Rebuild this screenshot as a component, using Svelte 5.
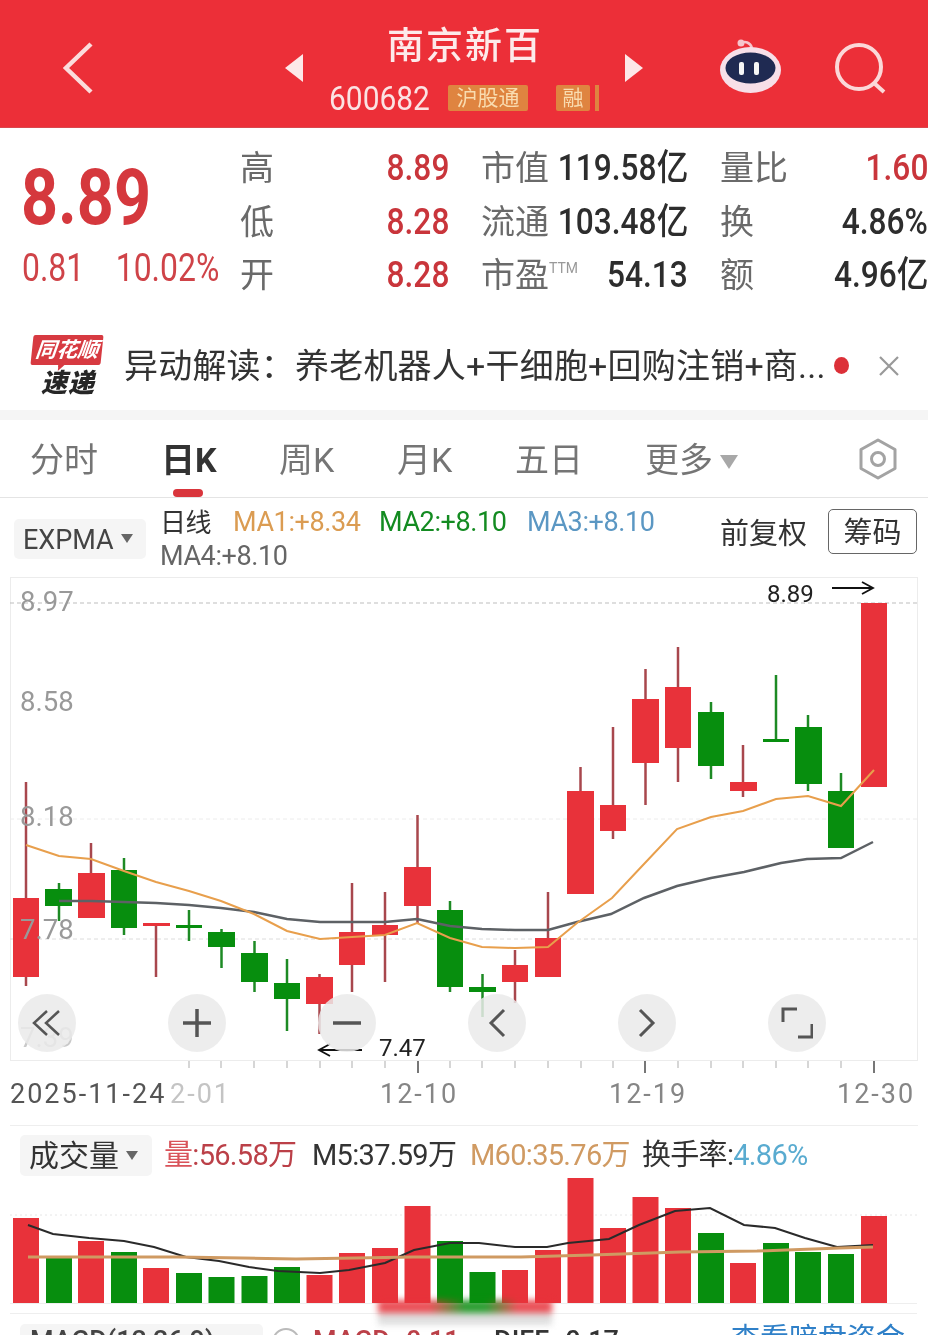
<script lang="ts">
  const R = '#e8323a';
  const G = '#078e0e';

  const stats = [
    [{ k: '高', v: '8.89', red: true }, { k: '市值', v: '119.58亿' }, { k: '量比', v: '1.60', red: true }],
    [{ k: '低', v: '8.28', red: true }, { k: '流通', v: '103.48亿' }, { k: '换', v: '4.86%' }],
    [{ k: '开', v: '8.28', red: true }, { k: '市盈', ttm: true, v: '54.13' }, { k: '额', v: '4.96亿' }]
  ];

  const tabs = ['分时', '日K', '周K', '月K', '五日', '更多'];

  // cx, wick top, wick bottom, body top, body bottom, body left, body right
  const candles = [
    [26, 782, 986, 898, 977, 13, 39, R],
    [59, 883, 921, 889, 906, 45, 72, G],
    [91, 843, 918, 873, 918, 78, 105, R],
    [124, 858, 935, 870, 928, 111, 137, G],
    [156, 923, 977, 923, 926, 143, 170, R],
    [189, 910, 941, 925, 928, 176, 202, G],
    [221.5, 929, 968, 932, 947, 208, 235, G],
    [254.5, 941, 992, 953, 982, 241, 268, G],
    [287, 959, 1031, 983, 999, 274, 300, G],
    [319.5, 974, 1034, 977, 1004, 306, 333, R],
    [352, 883, 992, 932, 965, 339, 365, R],
    [385, 892, 982, 925, 935, 372, 398, R],
    [417.5, 815, 923, 867, 906, 404, 431, R],
    [450, 901, 992, 910, 987, 437, 463, G],
    [482.5, 974, 1017, 987, 992, 469, 496, G],
    [515, 950, 1003, 965, 982, 502, 528, R],
    [548, 892, 977, 938, 977, 535, 561, R],
    [580.5, 767, 894, 791, 894, 567, 594, R],
    [613, 727, 839, 805, 831, 600, 626, R],
    [645.5, 669, 805, 699, 763, 632, 659, R],
    [678, 647, 782, 687, 748, 665, 691, R],
    [711, 702, 779, 712, 766, 698, 724, G],
    [743, 745, 797, 782, 791, 730, 757, R],
    [776, 675, 742, 739, 742, 763, 789, G],
    [808, 715, 791, 727, 784, 795, 822, G],
    [841, 773, 848, 791, 848, 828, 854, G],
    [874, 603, 787, 603, 787, 861, 887, R]
  ] as const;

  const ma1 = '26,845 59,856 91,859 124,871 156,882 189,891 221,901 254,914 287,931 320,939 352,937 385,935 417,923 450,938 482,947 515,948 548,947 577,923 612,898 644,864 677,829 711,817 743,811 776,799 808,796 841,806 874,770';
  const ma2 = '59,901 91,901 124,902 156,903 189,905 221,908 254,912 287,919 320,922 352,922 385,922 417,919 450,926 482,929 515,930 548,930 577,922 611,914 644,898 677,886 711,878 744,872 781,863 807,859 841,858 873,842';

  const grid = [
    { y: 603, c: '#bdbdbd' },
    { y: 819, c: '#ececec' },
    { y: 939, c: '#dcdcdc' }
  ];
  const yLabels = [
    { t: '8.97', y: 611 },
    { t: '8.58', y: 711 },
    { t: '8.18', y: 826 },
    { t: '7.78', y: 939 }
  ];
  const ticks = [189, 221, 254, 287, 320, 352, 385, 450, 482, 515, 548, 581, 613, 678, 711, 743, 776, 808, 841];
  const bigTicks = [418, 645, 874];

  const tops = [1218, 1257, 1241, 1252, 1268, 1273, 1277, 1276, 1267, 1275, 1253, 1248, 1206, 1241, 1272, 1270, 1250, 1178, 1228, 1197, 1208, 1233, 1263, 1243, 1252, 1254, 1216];
  const volColors = 'RGRGRGGGGRRRRGGRRRRRRGRGGGR';
  const centers = candles.map((c) => c[0]);

  const m5 = '28,1225 53,1234 89,1238 124,1241 154,1247 186,1257 219,1261 249,1267 278,1271 320,1273 349,1270 385,1263 414,1250 450,1243 479,1243 515,1247 547,1247 568,1243 609,1239 639,1225 675,1211 710,1208 744,1225 775,1228 805,1238 837,1247 873,1245';
  const m60 = '28,1257 178,1257 296,1259 414,1257 521,1257 592,1255 680,1252 757,1251 840,1248 873,1247';
</script>

<div class="screen">
  <header class="top">
    <svg class="back" width="30" height="52" viewBox="0 0 30 52" fill="none"><path d="M28 2 3 26l25 24" stroke="#fbdcdc" stroke-width="4.5" /></svg>
    <div class="title">
      <svg width="18" height="28" viewBox="0 0 18 28"><path d="M18 0v28L0 14z" fill="#fde8e8" /></svg>
      <div class="name">
        <div class="cn">南京新百</div>
        <div class="code">
          <span class="num">600682</span>
          <span class="badge">沪股通</span>
          <span class="badge rong">融</span>
          <span class="sliver"></span>
        </div>
      </div>
      <svg width="18" height="28" viewBox="0 0 18 28"><path d="M0 0v28l18-14z" fill="#fde8e8" /></svg>
    </div>
    <svg class="robot" width="61" height="56" viewBox="0 0 61 56">
      <path d="M21 5c4-2 9-1 11 5" fill="none" stroke="#f6c5cc" stroke-width="2.500" />
      <circle cx="21" cy="5" r="3.500" fill="#f6c5cc" />
      <ellipse cx="30.500" cy="32" rx="30.500" ry="23" fill="#f7dfe8" />
      <ellipse cx="30.500" cy="30" rx="25" ry="15.500" fill="#1f2a52" />
      <rect x="19" y="24" width="5" height="13" rx="2" fill="#f6f6f6" />
      <rect x="34" y="24" width="5" height="13" rx="2" fill="#f6f6f6" />
    </svg>
    <svg class="search" width="52" height="52" viewBox="0 0 52 52" fill="none">
      <circle cx="25" cy="25" r="22" stroke="#fbd8d8" stroke-width="4" />
      <path d="M40 41l10 9" stroke="#fbd8d8" stroke-width="4" />
    </svg>
  </header>

  <section class="quote">
    <div class="price">
      <div class="big">8.89</div>
      <div class="chg"><span>0.81</span><span>10.02%</span></div>
    </div>
    <div class="stats">
      {#each stats as row}
        {#each row as s}
          <div class="stat">
            <span class="k">{s.k}{#if s.ttm}<sup>TTM</sup>{/if}</span>
            <span class="v" class:red={s.red}>{s.v}</span>
          </div>
        {/each}
      {/each}
    </div>
  </section>

  <section class="notice">
    <div class="logo">
      <div class="bubble"><span>同花顺</span></div>
      <div class="fast">速递</div>
    </div>
    <div class="msg">异动解读：养老机器人+干细胞+回购注销+商...</div>
    <i class="dot"></i>
    <svg width="22" height="22" viewBox="0 0 22 22"><path d="M2 2l18 18M20 2 2 20" stroke="#999" stroke-width="2.200" /></svg>
  </section>

  <nav class="tabs">
    {#each tabs as t, i}
      <span class="tab t{i}" class:on={i === 1}>{t}{#if i === 5}<i class="caret large"></i>{/if}</span>
    {/each}
    <svg class="hex" width="40" height="42" viewBox="0 0 40 42" fill="none">
      <path d="M20 2l17 9.500v19L20 40 3 30.500v-19z" stroke="#a3a3a3" stroke-width="3" stroke-linejoin="round" />
      <circle cx="20" cy="21" r="6.500" stroke="#a3a3a3" stroke-width="3" />
    </svg>
  </nav>

  <div class="legend">
    <div class="pill expma">EXPMA<i class="caret"></i></div>
    <div class="lines">
      <div class="line">
        <span class="day">日线</span>
        <span class="ma1">MA1:+8.34</span>
        <span class="ma2">MA2:+8.10</span>
        <span class="ma3">MA3:+8.10</span>
      </div>
      <div class="line"><span class="ma4">MA4:+8.10</span></div>
    </div>
    <span class="fq">前复权</span>
    <span class="chip">筹码</span>
  </div>

  <div class="kline">
    <svg class="chart" width="928" height="538" viewBox="0 577 928 538">
      <rect x="10.500" y="577.500" width="907" height="483" fill="none" stroke="#ececec" />
      {#each grid as g}
        <line x1="10" x2="917" y1={g.y} y2={g.y} stroke={g.c} stroke-dasharray="4 3" />
      {/each}
      {#each candles as c}
        <line x1={c[0]} x2={c[0]} y1={c[1]} y2={c[2]} stroke={c[7] === R ? '#a8474d' : '#1d8a24'} stroke-width="2.500" />
        <rect x={c[5]} y={c[3]} width={c[6] - c[5]} height={c[4] - c[3]} fill={c[7]} />
      {/each}
      <polyline points={ma2} fill="none" stroke="#5d6165" stroke-width="2.500" />
      <polyline points={ma1} fill="none" stroke="#e89f4c" stroke-width="2" />
      {#each yLabels as l}
        <text x="20" y={l.y} class="axis">{l.t}</text>
      {/each}
      <text x="20" y="1047" class="axis faded">7.39</text>

      <text x="767" y="602" class="mark">8.89</text>
      <path d="M832 588h41m-11-6 11 6-11 6" fill="none" stroke="#111" stroke-width="1.800" />
      <text x="379" y="1056" class="mark">7.47</text>
      <path d="M362 1050h-43m11-6-11 6 11 6" fill="none" stroke="#111" stroke-width="1.800" />

      {#each ticks as t}
        <line x1={t} x2={t} y1="1061" y2="1068" stroke="#c9c9c9" stroke-width="1.500" />
      {/each}
      {#each bigTicks as t}
        <line x1={t} x2={t} y1="1061" y2="1073" stroke="#777" stroke-width="2" />
      {/each}
      <text x="10" y="1103" class="date dark">2025-11-24</text>
      <text x="170" y="1103" class="date pale">2-01</text>
      <text x="380" y="1103" class="date">12-10</text>
      <text x="609" y="1103" class="date">12-19</text>
      <text x="837" y="1103" class="date">12-30</text>
    </svg>

    <div class="controls">
      <button aria-label="first"><svg width="32" height="32" viewBox="0 0 32 32" fill="none"><path d="M16 4 3 16l13 12M28 4 15 16l13 12" stroke="#555" stroke-width="2.500" /></svg></button>
      <button aria-label="zoom in"><svg width="30" height="30" viewBox="0 0 30 30"><path d="M15 1v28M1 15h28" stroke="#555" stroke-width="3.500" /></svg></button>
      <button aria-label="zoom out"><svg width="30" height="30" viewBox="0 0 30 30"><path d="M1 15h28" stroke="#555" stroke-width="3.500" /></svg></button>
      <button aria-label="prev"><svg width="18" height="30" viewBox="0 0 18 30" fill="none"><path d="M16 2 3 15l13 13" stroke="#555" stroke-width="3" /></svg></button>
      <button aria-label="next"><svg width="18" height="30" viewBox="0 0 18 30" fill="none"><path d="M2 2l13 13L2 28" stroke="#555" stroke-width="3" /></svg></button>
      <button aria-label="fullscreen"><svg width="32" height="32" viewBox="0 0 32 32" fill="none"><path d="M16 2H2v13M17 30h14V17" stroke="#555" stroke-width="3" /></svg></button>
    </div>
  </div>

  <div class="volume">
    <div class="vol-head">
      <div class="pill vol-pill">成交量<i class="caret"></i></div>
      <span class="vi red-t"><b>量</b>:56.58万</span>
      <span class="vi dark-t">M5:37.59万</span>
      <span class="vi or-t">M60:35.76万</span>
      <span class="vi dark-t">换手率:<em>4.86%</em></span>
    </div>
    <svg class="bars" width="928" height="128" viewBox="0 1177 928 128">
      <line x1="10" x2="917" y1="1215" y2="1215" stroke="#e6e6e6" stroke-dasharray="2 3" />
      <line x1="10" x2="917" y1="1303.500" y2="1303.500" stroke="#eee" />
      {#each tops as t, i}
        <rect x={centers[i] - 13} y={t} width="26" height={1303 - t} fill={volColors[i] === 'R' ? R : G} />
      {/each}
      <polyline points={m5} fill="none" stroke="#2a2a2a" stroke-width="2" />
      <polyline points={m60} fill="none" stroke="#cf9a62" stroke-width="3" />
    </svg>
  </div>

  <div class="macd">
    <div class="pill macd-pill">MACD(12,26,9)</div>
    <span class="info"></span>
    <span class="m m-a red-t">MACD:-0.11</span>
    <span class="m m-b dark-t">DIFF:-0.17</span>
    <span class="m link">查看暗盘资金</span>
  </div>
  <div class="smear"></div>
</div>

<style>
  :global(body) {
    margin: 0;
    background: #fff;
  }
  .screen {
    position: relative;
    width: 928px;
    height: 1335px;
    overflow: hidden;
    background: #fff;
    font-family: Roboto, 'Noto Sans CJK SC', sans-serif;
    filter: blur(0.5px);
  }
  .top {
    display: flex;
    align-items: flex-start;
    box-sizing: border-box;
    height: 128px;
    background: #ec2f38;
    border-bottom: 1px solid #d9484e;
    padding-left: 63px;
  }
  .back {
    margin-top: 42px;
  }
  .title {
    display: flex;
    align-items: center;
    margin-left: 192px;
    width: 358px;
    height: 136px;
    justify-content: space-between;
  }
  .name {
    width: 270px;
    margin-top: 3px;
  }
  .cn {
    color: #fdeaea;
    font-size: 37px;
    font-weight: 500;
    line-height: 42px;
    letter-spacing: 2px;
    text-align: center;
    padding-left: 2px;
  }
  .code {
    display: flex;
    align-items: center;
    margin-top: 15px;
    height: 30px;
    margin-left: 0;
  }
  .num {
    color: #fbe3e3;
    font-size: 34px;
    width: 119px;
    transform: scaleX(0.88);
    transform-origin: left;
  }
  .badge {
    display: block;
    background: #df8440;
    color: #f9dcb0;
    font-size: 21px;
    line-height: 26px;
    width: 80px;
    text-align: center;
    border-radius: 2px;
  }
  .rong {
    width: 34px;
    margin-left: 28px;
  }
  .sliver {
    width: 4px;
    height: 26px;
    margin-left: 5px;
    background: #df8440;
  }
  .robot {
    margin-left: 77px;
    margin-top: 38px;
  }
  .search {
    margin-left: 53px;
    margin-top: 42px;
  }

  .quote {
    display: flex;
    height: 196px;
    box-sizing: border-box;
    padding: 14px 0 0 22px;
  }
  .price {
    width: 218px;
    color: #d5383d;
  }
  .big {
    font-size: 77px;
    font-weight: 700;
    line-height: 84px;
    margin-top: 14px;
    transform: scaleX(0.84);
    transform-origin: left;
    margin-left: -1px;
  }
  .chg {
    display: flex;
    justify-content: space-between;
    width: 193px;
    font-size: 38px;
    line-height: 40px;
    margin-top: 8px;
    color: #cf4348;
  }
  .chg span {
    display: inline-block;
    transform: scaleX(0.84);
    transform-origin: left;
  }
  .chg span:last-child {
    transform-origin: right;
    margin-right: 4px;
  }
  .stats {
    display: grid;
    grid-template-columns: 209px 207px 208px;
    grid-auto-rows: 53.5px;
    column-gap: 32px;
    height: 160px;
  }
  .stat {
    display: flex;
    align-items: baseline;
    justify-content: space-between;
    white-space: nowrap;
    line-height: 53px;
    overflow: visible;
  }
  .k {
    color: #6a6a6a;
    font-size: 34px;
    flex: none;
  }
  .k sup {
    font-size: 14px;
    color: #999;
    vertical-align: 14px;
    line-height: 0;
  }
  .v {
    color: #2d2d2d;
    font-size: 36px;
    font-weight: 500;
    display: inline-block;
    flex: none;
    margin-left: -20px;
    transform: scaleX(0.88);
    transform-origin: right;
  }
  .v.red {
    color: #c9353b;
  }

  .notice {
    display: flex;
    align-items: center;
    height: 96px;
    box-sizing: border-box;
    padding-left: 30px;
    border-bottom: 10px solid #f5f5f5;
  }
  .logo {
    width: 76px;
    margin-top: 1px;
  }
  .bubble {
    position: relative;
    background: #d73a41;
    transform: skewX(-6deg);
    height: 30px;
    width: 70px;
    margin-left: 2px;
    margin-top: -2px;
    border-radius: 2px;
    text-align: center;
  }
  .bubble::after {
    content: '';
    position: absolute;
    left: 28px;
    bottom: -6px;
    border: 4px solid transparent;
    border-top: 4px solid #d73a41;
    border-left: 4px solid #d73a41;
  }
  .bubble span {
    color: #fff;
    font-size: 21px;
    font-weight: 700;
    font-style: italic;
    line-height: 30px;
    display: block;
  }
  .fast {
    color: #262626;
    font-size: 26px;
    font-weight: 900;
    font-style: italic;
    line-height: 30px;
    text-align: center;
    margin-top: 3px;
    letter-spacing: 1px;
  }
  .msg {
    margin-left: 18px;
    margin-top: -7px;
    width: 710px;
    font-size: 34px;
    letter-spacing: 0.2px;
    color: #333;
    white-space: nowrap;
  }
  .dot {
    width: 15px;
    height: 17px;
    border-radius: 50%;
    background: #dc3038;
    margin-top: -4px;
  }
  .notice svg {
    margin-left: 29px;
    margin-top: -2px;
  }

  .tabs {
    position: relative;
    display: flex;
    align-items: center;
    height: 78px;
    box-sizing: border-box;
    border-bottom: 1px solid #e4e4e4;
  }
  .tab {
    color: #757575;
    font-size: 34px;
    position: absolute;
    top: 13px;
    white-space: nowrap;
  }
  .t0 { left: 30px; }
  .t1 { left: 161px; }
  .t2 { left: 279px; }
  .t3 { left: 397px; }
  .t4 { left: 515px; }
  .t5 { left: 645px; }
  .tab.on {
    color: #333;
    font-weight: 700;
  }
  .tab.on::after {
    content: '';
    position: absolute;
    left: 12px;
    top: 56px;
    width: 30px;
    height: 8px;
    border-radius: 4px;
    background: #d9353c;
  }
  .caret {
    display: inline-block;
    border: 6px solid transparent;
    border-top: 9px solid #666;
    border-bottom: 0;
    margin-left: 7px;
    vertical-align: 6px;
  }
  .caret.large {
    border-width: 14px 9px 0;
    border-top-color: #a8a8a8;
    vertical-align: 3px;
  }
  .hex {
    position: absolute;
    right: 30px;
    top: 18px;
  }

  .legend {
    display: flex;
    height: 79px;
    box-sizing: border-box;
    padding-left: 14px;
    position: relative;
  }
  .pill {
    background: #f5f5f5;
    border-radius: 5px;
    color: #444;
    white-space: nowrap;
  }
  .expma {
    width: 132px;
    height: 40px;
    box-sizing: border-box;
    margin-top: 21px;
    padding-left: 9px;
    font-size: 27px;
    line-height: 42px;
  }
  .lines {
    margin-left: 14px;
    margin-top: 7px;
    font-size: 27px;
    letter-spacing: -0.4px;
  }
  .line {
    display: flex;
    height: 34px;
    align-items: center;
  }
  .day {
    color: #333;
    width: 73px;
    font-size: 26px;
    margin-top: -3px;
  }
  .ma1 {
    color: #db9c52;
    width: 146px;
  }
  .ma2 {
    color: #138b21;
    width: 148px;
  }
  .ma3 {
    color: #5b97c3;
  }
  .ma4 {
    color: #666;
  }
  .fq {
    position: absolute;
    left: 720px;
    top: 12px;
    font-size: 29px;
    color: #333;
  }
  .chip {
    position: absolute;
    left: 828px;
    top: 11px;
    width: 89px;
    height: 45px;
    box-sizing: border-box;
    border: 1px solid #666;
    border-radius: 5px;
    text-align: center;
    font-size: 29px;
    line-height: 46px;
    color: #333;
  }

  .kline {
    position: relative;
    height: 548px;
  }
  .chart {
    display: block;
  }
  .axis {
    font-size: 27.500px;
    fill: #999;
  }
  .faded {
    fill: #c9c9c9;
  }
  .mark {
    font-size: 24px;
    fill: #222;
  }
  .date {
    font-size: 27px;
    fill: #868686;
    letter-spacing: 2px;
  }
  .date.dark {
    fill: #555;
  }
  .date.pale {
    fill: #c4c4c4;
  }
  .controls {
    position: absolute;
    left: 18px;
    top: 417px;
    display: flex;
    gap: 92px;
  }
  .controls button {
    display: flex;
    align-items: center;
    justify-content: center;
    width: 58px;
    height: 58px;
    padding: 0;
    border: 0;
    border-radius: 50%;
    background: rgba(234, 234, 234, 0.85);
  }

  .volume {
    position: relative;
    box-sizing: border-box;
    height: 187px;
    margin: 0 10px;
    border-top: 1px solid #eee;
  }
  .vol-head {
    display: flex;
    align-items: center;
    height: 51px;
    padding: 7px 0 0 10px;
    box-sizing: border-box;
  }
  .vol-pill {
    width: 132px;
    height: 41px;
    box-sizing: border-box;
    padding-left: 9px;
    font-size: 30px;
    line-height: 41px;
    color: #333;
  }
  .vi {
    font-size: 29px;
    letter-spacing: -0.700px;
    position: absolute;
    top: 5px;
    white-space: nowrap;
  }
  .vi b {
    font-weight: 400;
    color: #d9535a;
  }
  .vi em {
    font-style: normal;
    color: #59abd0;
  }
  .vi:nth-child(2) { left: 154px; }
  .vi:nth-child(3) { left: 302px; }
  .vi:nth-child(4) { left: 460px; }
  .vi:nth-child(5) { left: 632px; }
  .red-t { color: #bb4048; }
  .dark-t { color: #333; }
  .or-t { color: #d09a62; }
  .bars {
    display: block;
    margin: 0 0 0 -10px;
  }
  .smear {
    position: absolute;
    left: 378px;
    top: 1300px;
    width: 174px;
    height: 25px;
    background: linear-gradient(#d9d9d900 0, #d9d9d900 48%, #d9d9d9 56%, #d9d9d9 100%),
      linear-gradient(90deg, #e8323a, #e8323a 30%, #078e0e 50%, #078e0e 62%, #e8323a 80%);
    filter: blur(3px);
    opacity: 0.85;
  }
  .macd {
    position: absolute;
    left: 10px;
    right: 11px;
    top: 1313px;
    height: 30px;
    border-top: 1px solid #eee;
  }
  .macd-pill {
    position: absolute;
    left: 10px;
    top: 10px;
    width: 243px;
    height: 30px;
    padding-left: 10px;
    box-sizing: border-box;
    font-size: 27px;
    line-height: 34px;
    font-weight: 500;
  }
  .info {
    position: absolute;
    left: 262px;
    top: 14px;
    width: 24px;
    height: 24px;
    border: 2px solid #bbb;
    border-radius: 50%;
  }
  .m {
    position: absolute;
    top: 12px;
    line-height: 30px;
    font-size: 27px;
    white-space: nowrap;
    font-weight: 500;
  }
  .m-a { left: 303px; }
  .m-b { left: 484px; }
  .m.link {
    right: 12px;
    color: #2f80c8;
    font-size: 29px;
    font-weight: 400;
    top: 10px;
  }
</style>
